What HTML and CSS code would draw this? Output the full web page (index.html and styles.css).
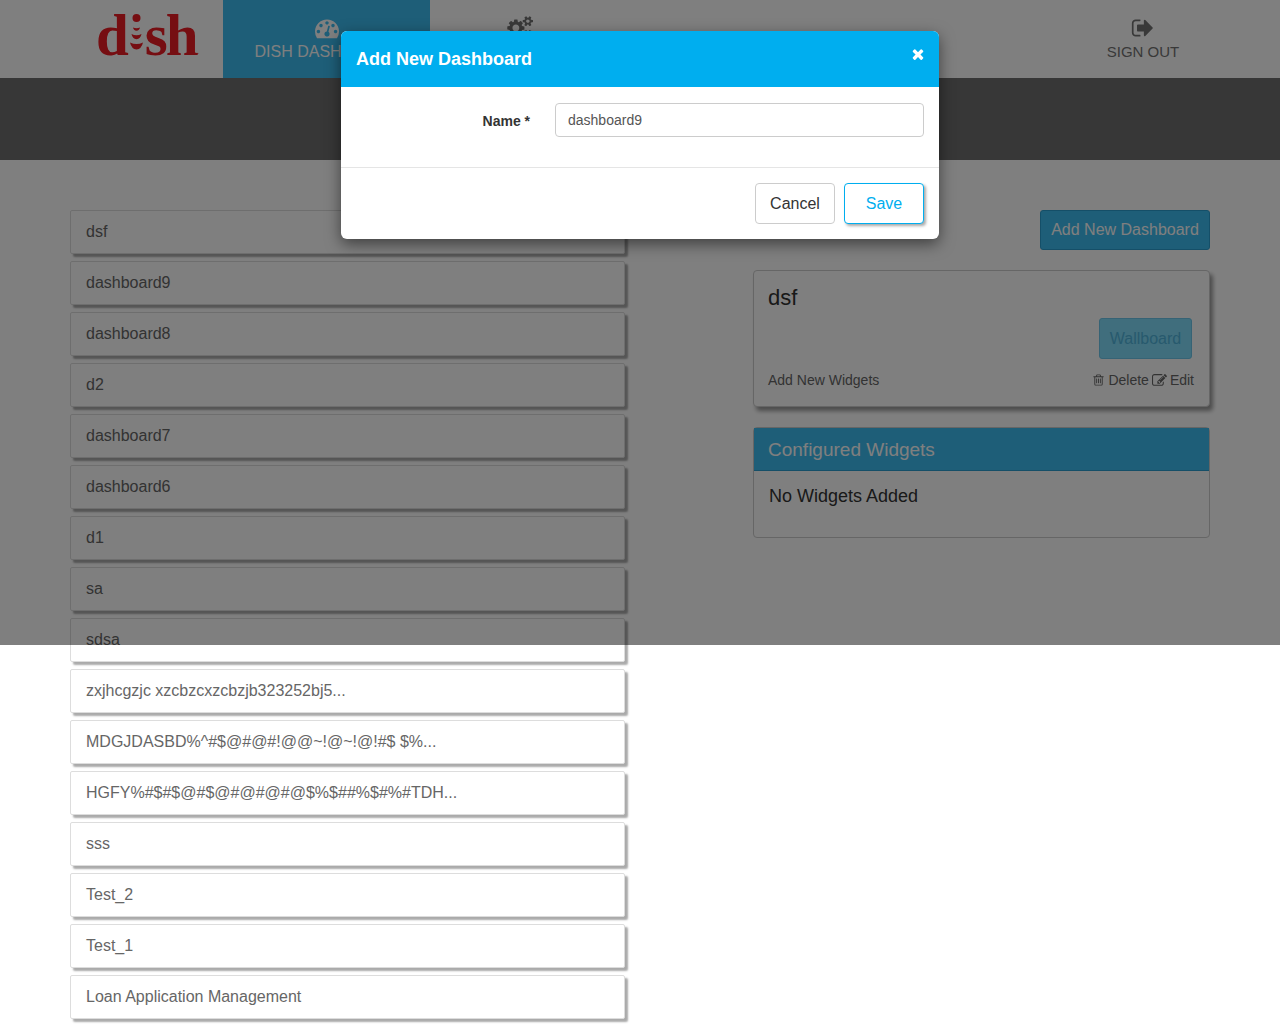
FILE: index.html
```html
<!DOCTYPE html>
<html lang="en">
<head>
    <meta charset="UTF-8">
    <title>Dish Dashboard</title>
    <link rel="stylesheet" href="styles.css">
</head>
<body>
<header class="topbar">
    <div class="logo">
        <span>d</span>
        <svg class="logo-i" viewBox="0 0 15 42">
            <circle cx="7.500" cy="4" r="4"/>
            <path d="M4 13.500q3.500 1.500 7 0q-.5 3-3.500 3.200q-3-.2-3.500-3.200z"/>
            <path d="M2.500 20q5 2.500 10 0q-1 5-5 5.200q-4-.2-5-5.200z"/>
            <path d="M1 28.500q6.500 3 13 0q-1.500 6.500-6.500 7q-5-.5-6.500-7z"/>
        </svg>
        <span>sh</span>
        <small class="logo-tm">.</small>
    </div>
    <nav class="nav">
        <a class="nav-item active">
            <svg class="nav-icon" viewBox="0 0 1792 1792"><path d="M384 1152q0-53-37.500-90.500t-90.500-37.500-90.500 37.500-37.500 90.500 37.500 90.500 90.500 37.500 90.500-37.500 37.500-90.500zm192-448q0-53-37.500-90.500t-90.500-37.500-90.500 37.500-37.500 90.500 37.500 90.500 90.500 37.500 90.500-37.500 37.500-90.500zm428 481l101-382q6-26-7.500-48.500t-38.500-29.500-48 6.500-30 39.500l-101 382q-60 5-107 43.500t-63 98.500q-20 77 20 146t117 89 146-20 89-117q16-60-6-117t-72-91zm660-33q0-53-37.500-90.500t-90.500-37.500-90.500 37.500-37.500 90.500 37.500 90.500 90.500 37.500 90.500-37.500 37.500-90.500zm-640-640q0-53-37.500-90.500t-90.500-37.500-90.500 37.500-37.500 90.500 37.500 90.500 90.500 37.500 90.500-37.500 37.500-90.500zm448 192q0-53-37.500-90.500t-90.500-37.500-90.500 37.500-37.500 90.500 37.500 90.500 90.500 37.500 90.500-37.500 37.500-90.500zm320 448q0 261-141 483-19 29-54 29h-1402q-35 0-54-29-141-221-141-483 0-182 71-348t191-286 286-191 348-71 348 71 286 191 191 286 71 348z"/></svg>
            DISH DASHBOARD
        </a>
        <a class="nav-item settings">
            <svg class="nav-icon cogs" viewBox="0 0 2048 1792"><path d="M896 896q0-106-75-181t-181-75-181 75-75 181 75 181 181 75 181-75 75-181zm768 512q0-52-38-90t-90-38-90 38-38 90q0 53 37.500 90.500t90.500 37.500 90.500-37.500 37.500-90.500zm0-1024q0-52-38-90t-90-38-90 38-38 90q0 53 37.500 90.500t90.500 37.500 90.500-37.500 37.500-90.500zm-384 421v185q0 10-7 19.500t-16 10.500l-155 24q-11 35-32 76 34 48 90 115 7 11 7 20 0 12-7 19-23 30-82.500 89.500t-78.500 59.500q-11 0-21-7l-115-90q-37 19-77 31-11 108-23 155-7 24-30 24h-186q-11 0-20-7.500t-10-17.500l-23-153q-34-10-75-31l-118 89q-7 7-20 7-11 0-21-8-144-133-144-160 0-9 7-19 10-14 41-53t47-61q-23-44-35-82l-152-24q-10-1-17-9.500t-7-19.500v-185q0-10 7-19.500t16-10.500l155-24q11-35 32-76-34-48-90-115-7-11-7-20 0-12 7-20 22-30 82-89t79-59q11 0 21 7l115 90q34-18 77-32 11-108 23-154 7-24 30-24h186q11 0 20 7.500t10 17.500l23 153q34 10 75 31l118-89q8-7 20-7 11 0 21 8 144 133 144 160 0 8-7 19-12 16-42 54t-45 60q23 48 34 82l152 23q10 2 17 10.500t7 19.500zm640 533v140q0 16-149 31-12 27-30 52 51 113 51 138 0 4-4 7-122 71-124 71-8 0-46-47t-52-68q-20 2-30 2t-30-2q-14 21-52 68t-46 47q-2 0-124-71-4-3-4-7 0-25 51-138-18-25-30-52-149-15-149-31v-140q0-16 149-31 13-29 30-52-51-113-51-138 0-4 4-7 4-2 35-20t59-34 30-16q8 0 46 46.500t52 67.500q20-2 30-2t30 2q51-71 92-112l6-2q4 0 124 70 4 3 4 7 0 25-51 138 17 23 30 52 149 15 149 31zm0-1024v140q0 16-149 31-12 27-30 52 51 113 51 138 0 4-4 7-122 71-124 71-8 0-46-47t-52-68q-20 2-30 2t-30-2q-14 21-52 68t-46 47q-2 0-124-71-4-3-4-7 0-25 51-138-18-25-30-52-149-15-149-31v-140q0-16 149-31 13-29 30-52-51-113-51-138 0-4 4-7 4-2 35-20t59-34 30-16q8 0 46 46.500t52 67.500q20-2 30-2t30 2q51-71 92-112l6-2q4 0 124 70 4 3 4 7 0 25-51 138 17 23 30 52 149 15 149 31z"/></svg>
        </a>
        <a class="nav-item signout">
            <svg class="nav-icon" viewBox="0 0 1792 1792"><path d="M704 1440q0 4 1 20t.5 26.500-3 23.500-10 19.500-20.500 6.500h-320q-119 0-203.500-84.500t-84.500-203.500v-704q0-119 84.500-203.500t203.500-84.500h320q13 0 22.500 9.500t9.500 22.500q0 4 1 20t.5 26.500-3 23.500-10 19.500-20.500 6.500h-320q-66 0-113 47t-47 113v704q0 66 47 113t113 47h312l11.500 1 11.500 3 8 5.500 7 9 2 13.500zm928-544q0 26-19 45l-544 544q-19 19-45 19t-45-19-19-45v-288h-448q-26 0-45-19t-19-45v-384q0-26 19-45t45-19h448v-288q0-26 19-45t45-19 45 19l544 544q19 19 19 45z"/></svg>
            SIGN OUT
        </a>
    </nav>
</header>
<div class="band"></div>

<main class="main">
    <ul class="dash-list">
        <li class="dash-item">dsf</li>
        <li class="dash-item">dashboard9</li>
        <li class="dash-item">dashboard8</li>
        <li class="dash-item">d2</li>
        <li class="dash-item">dashboard7</li>
        <li class="dash-item">dashboard6</li>
        <li class="dash-item">d1</li>
        <li class="dash-item">sa</li>
        <li class="dash-item">sdsa</li>
        <li class="dash-item">zxjhcgzjc xzcbzcxzcbzjb323252bj5...</li>
        <li class="dash-item">MDGJDASBD%^#$@#@#!@@~!@~!@!#$ $%...</li>
        <li class="dash-item">HGFY%#$#$@#$@#@#@#@$%$##%$#%#TDH...</li>
        <li class="dash-item">sss</li>
        <li class="dash-item">Test_2</li>
        <li class="dash-item">Test_1</li>
        <li class="dash-item">Loan Application Management</li>
    </ul>

    <section class="detail">
        <div class="add-row">
            <button class="btn-add">Add New Dashboard</button>
        </div>
        <div class="card">
            <h2 class="card-title">dsf</h2>
            <div class="wall-row">
                <button class="btn-wall">Wallboard</button>
            </div>
            <div class="card-foot">
                <a>Add New Widgets</a>
                <span class="card-actions">
                    <svg class="mini-icon trash" viewBox="0 0 1792 1792"><path d="M704 736v576q0 14-9 23t-23 9h-64q-14 0-23-9t-9-23v-576q0-14 9-23t23-9h64q14 0 23 9t9 23zm256 0v576q0 14-9 23t-23 9h-64q-14 0-23-9t-9-23v-576q0-14 9-23t23-9h64q14 0 23 9t9 23zm256 0v576q0 14-9 23t-23 9h-64q-14 0-23-9t-9-23v-576q0-14 9-23t23-9h64q14 0 23 9t9 23zm128 724v-948h-896v948q0 22 7 40.500t14.500 27 10.500 8.500h832q3 0 10.500-8.500t14.500-27 7-40.500zm-672-1076h448l-48-117q-7-9-17-11h-317q-10 2-17 11zm928 32v64q0 14-9 23t-23 9h-96v948q0 83-47 143.500t-113 60.500h-832q-66 0-113-58.500t-47-141.500v-952h-96q-14 0-23-9t-9-23v-64q0-14 9-23t23-9h309l70-167q15-37 54-63t79-26h320q40 0 79 26t54 63l70 167h309q14 0 23 9t9 23z"/></svg>
                    Delete
                    <svg class="mini-icon" viewBox="0 0 1792 1792"><path d="M888 1184l116-116-152-152-116 116v56h96v96h56zm440-720q-16-16-33 1l-350 350q-17 17-1 33t33-1l350-350q17-17 1-33zm80 594v190q0 119-84.500 203.500t-203.500 84.500h-832q-119 0-203.500-84.500t-84.500-203.500v-832q0-119 84.500-203.500t203.500-84.500h832q63 0 117 25 15 7 18 23 3 17-9 29l-49 49q-14 14-32 8-23-6-45-6h-832q-66 0-113 47t-47 113v832q0 66 47 113t113 47h832q66 0 113-47t47-113v-126q0-13 9-22l64-64q15-15 35-7t20 29zm-96-738l288 288-672 672h-288v-288zm444 132l-92 92-288-288 92-92q28-28 68-28t68 28l152 152q28 28 28 68t-28 68z"/></svg>
                    Edit
                </span>
            </div>
        </div>
        <div class="widgets">
            <h3 class="widgets-head">Configured Widgets</h3>
            <p class="widgets-body">No Widgets Added</p>
        </div>
    </section>
</main>

<div class="backdrop"></div>

<div class="modal">
    <div class="modal-head">
        <h4 class="modal-title">Add New Dashboard</h4>
        <svg class="modal-close" viewBox="0 0 1792 1792"><path d="M1490 1322q0 40-28 68l-136 136q-28 28-68 28t-68-28l-294-294-294 294q-28 28-68 28t-68-28l-136-136q-28-28-28-68t28-68l294-294-294-294q-28-28-28-68t28-68l136-136q28-28 68-28t68 28l294 294 294-294q28-28 68-28t68 28l136 136q28 28 28 68t-28 68l-294 294 294 294q28 28 28 68z"/></svg>
    </div>
    <div class="modal-body">
        <label class="field-label" for="dash-name">Name *</label>
        <input class="field-input" id="dash-name" type="text" value="dashboard9">
    </div>
    <div class="modal-foot">
        <button class="btn-cancel">Cancel</button>
        <button class="btn-save">Save</button>
    </div>
</div>
</body>
</html>
```

FILE: styles.css
```css
* {
    box-sizing: border-box;
}

body {
    margin: 0;
    height: 1026px;
    overflow: hidden;
    position: relative;
    background: #fff;
    font-family: "Liberation Sans", Arial, sans-serif;
    font-size: 16px;
    color: #666;
}

/* top bar */
.topbar {
    display: flex;
    height: 78px;
    padding-left: 96px;
}

.logo {
    display: flex;
    width: 127px;
    height: 78px;
    align-items: flex-start;
    padding-top: 5px;
    font-family: "Liberation Serif", serif;
    font-weight: bold;
    font-size: 59px;
    line-height: 60px;
    letter-spacing: -2px;
    color: #ec1c24;
}

.logo-i {
    flex: none;
    width: 15px;
    height: 42px;
    margin: 9px 1px 0 2px;
    fill: #ec1c24;
}

.logo-tm {
    font-size: 10px;
    font-weight: normal;
    line-height: 92px;
    letter-spacing: 0;
}

.nav {
    display: flex;
    flex: 1;
}

.nav-item {
    display: flex;
    flex-direction: column;
    align-items: center;
    padding-top: 16px;
    color: #737373;
    white-space: nowrap;
}

.nav-item.active {
    width: 207px;
    background: #3dbcf0;
    color: #fff;
}

.nav-item.settings {
    width: 181px;
}

.nav-item.signout {
    margin-left: auto;
    width: 100px;
    margin-right: 87px;
    font-size: 15px;
}

.nav-icon {
    width: 24px;
    height: 24px;
    margin-bottom: 3px;
    fill: currentColor;
}

.nav-icon.cogs {
    width: 28px;
}

.band {
    height: 82px;
    background: #6f6f6f;
}

/* main columns */
.main {
    display: grid;
    grid-template-columns: 555px 457px;
    column-gap: 128px;
    padding: 50px 70px 0;
    align-items: start;
}

.dash-list {
    list-style: none;
    margin: 0;
    padding: 0;
    display: flex;
    flex-direction: column;
    gap: 7px;
}

.dash-item {
    height: 44px;
    padding: 0 15px;
    line-height: 41px;
    border: 1px solid #ddd;
    border-radius: 2px;
    box-shadow: 3px 3px 2px #aaa;
    background: #fff;
}

.add-row {
    display: flex;
    justify-content: flex-end;
    margin-bottom: 20px;
}

.btn-add {
    width: 170px;
    height: 40px;
    padding: 0;
    background: #3dbcf0;
    border: 1px solid #2a9fd0;
    border-radius: 3px;
    color: #fff;
    font: 16px "Liberation Sans", Arial, sans-serif;
}

.card {
    height: 137px;
    padding: 14px 14px 0;
    border: 1px solid #ccc;
    border-radius: 4px;
    box-shadow: 3px 4px 4px #999;
    background: #fff;
}

.card-title {
    margin: 0;
    font-size: 22px;
    font-weight: normal;
    line-height: 26px;
    color: #333;
}

.wall-row {
    display: flex;
    justify-content: flex-end;
    margin: 7px 3px 0 0;
}

.btn-wall {
    width: 93px;
    height: 41px;
    padding: 0;
    background: #80dcfa;
    border: 1px solid #6cc6ea;
    border-radius: 3px;
    color: #4fb4dc;
    font: 16px "Liberation Sans", Arial, sans-serif;
}

.card-foot {
    display: flex;
    justify-content: space-between;
    margin-top: 12px;
    font-size: 14px;
    line-height: 18px;
}

.card-actions {
    display: flex;
    align-items: center;
    gap: 3px;
    margin-right: 1px;
}

.mini-icon {
    width: 15px;
    height: 15px;
    fill: currentColor;
}

.mini-icon.trash {
    width: 13px;
    height: 14px;
}

.widgets {
    height: 111px;
    margin-top: 20px;
    border: 1px solid #ccc;
    border-radius: 4px;
    background: #fff;
}

.widgets-head {
    margin: 0;
    height: 43px;
    padding: 0 14px;
    background: #3dbcf0;
    border-bottom: 1px solid #2a9fd0;
    color: #fff;
    font-size: 19px;
    font-weight: normal;
    line-height: 44px;
}

.widgets-body {
    margin: 14px 15px 0;
    font-size: 18px;
    line-height: 22px;
    color: #333;
}

/* modal layer */
.backdrop {
    position: absolute;
    top: 0;
    left: 0;
    width: 100%;
    height: 645px;
    background: rgba(0, 0, 0, 0.5);
}

.modal {
    position: absolute;
    top: 31px;
    left: 341px;
    width: 598px;
    height: 208px;
    background: #fff;
    border-radius: 6px;
    overflow: hidden;
    box-shadow: 0 5px 15px rgba(0, 0, 0, 0.5);
}

.modal-head {
    display: flex;
    justify-content: space-between;
    height: 56px;
    padding: 0 13px 0 15px;
    background: #00aeef;
    color: #fff;
}

.modal-title {
    margin: 0;
    font-size: 18px;
    font-weight: bold;
    line-height: 56px;
}

.modal-close {
    width: 16px;
    height: 16px;
    margin-top: 15px;
    fill: #fff;
}

.modal-body {
    display: flex;
    height: 81px;
    padding: 16px 15px 0;
    border-bottom: 1px solid #e5e5e5;
}

.field-label {
    flex: none;
    width: 174px;
    text-align: right;
    font-size: 14px;
    font-weight: bold;
    line-height: 36px;
    color: #333;
}

.field-input {
    flex: none;
    width: 369px;
    height: 34px;
    margin-left: 25px;
    padding: 0 12px;
    border: 1px solid #ccc;
    border-radius: 4px;
    font: 14px "Liberation Sans", Arial, sans-serif;
    color: #555;
}

.modal-foot {
    display: flex;
    justify-content: flex-end;
    gap: 9px;
    padding: 15px 15px 0;
}

.btn-cancel,
.btn-save {
    width: 80px;
    height: 41px;
    padding: 0;
    background: #fff;
    border: 1px solid #ccc;
    border-radius: 4px;
    color: #333;
    font: 16px "Liberation Sans", Arial, sans-serif;
}

.btn-save {
    border-color: #00aeef;
    color: #00aeef;
    box-shadow: 2px 2px 3px #aaa;
}
```
